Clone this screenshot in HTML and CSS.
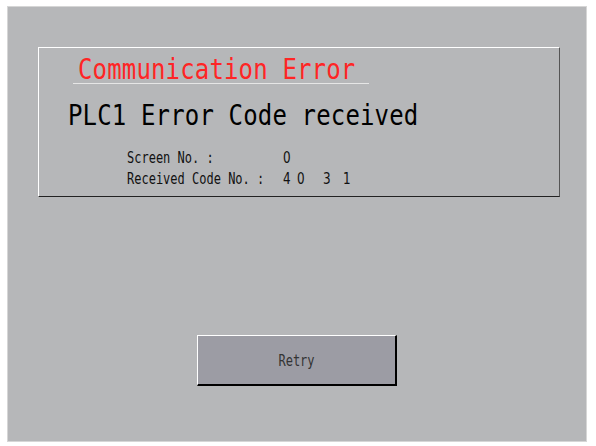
FILE: index.html
```html
<!DOCTYPE html>
<html>
<head>
<meta charset="utf-8">
<link rel="stylesheet" href="styles.css">
</head>
<body>
<div class="panel">
  <div class="msgbox">
    <div class="title"><span class="stretch">Communication Error</span></div>
    <div class="headline"><span class="stretch">PLC1 Error Code received</span></div>
    <div class="info">
      <div class="row"><span class="stretch-s"><span class="lbl">Screen No. :</span><span class="val">0</span></span></div>
      <div class="row"><span class="stretch-s"><span class="lbl">Received Code No. :</span><span class="val"><span class="d1">4</span><span class="d2">0</span><span class="d3">3</span><span>1</span></span></span></div>
    </div>
  </div>
  <button class="retry"><span class="stretch-s">Retry</span></button>
</div>
</body>
</html>
```
FILE: styles.css
```css
html, body {
  margin: 0;
  padding: 0;
  background: #ffffff;
}
body {
  width: 596px;
  height: 446px;
  overflow: hidden;
  font-family: "DejaVu Sans Mono", monospace;
}
.panel {
  margin: 6px 0 0 7px;
  width: 578px;
  height: 434px;
  background: #b6b7b9;
  border: 1px solid #d6d6d6;
  box-sizing: content-box;
  display: flex;
  flex-direction: column;
  align-items: flex-start;
}
.msgbox {
  margin: 40px 0 0 30px;
  width: 520px;
  height: 148px;
  border-top: 1px solid #ffffff;
  border-left: 1px solid #ffffff;
  border-right: 1px solid #555555;
  border-bottom: 1px solid #222222;
  display: flex;
  flex-direction: column;
}
.stretch {
  display: inline-block;
  transform: scaleY(1.15);
  transform-origin: 0 100%;
}
.stretch-s {
  display: inline-block;
  transform: scaleY(1.25);
  transform-origin: 0 100%;
}
.title {
  margin: 9px 0 0 34px;
  width: 291px;
  padding: 3px 0 0 5px;
  height: 23px;
  border-bottom: 1px solid #e6e6e6;
  color: #ff2525;
  font-size: 24px;
  line-height: 24px;
  letter-spacing: 0.15px;
  white-space: pre;
}
.headline {
  margin: 22px 0 0 29px;
  height: 24px;
  color: #000000;
  font-size: 24px;
  line-height: 24px;
  letter-spacing: 0.15px;
  white-space: pre;
}
.info {
  margin: 23px 0 0 88px;
  font-size: 12px;
  line-height: 12px;
  color: #111111;
  white-space: pre;
  display: flex;
  flex-direction: column;
  gap: 9px;
}
.row {
  height: 12px;
}
.lbl {
  display: inline-block;
  width: 156px;
}
.val {
  display: inline-block;
  font-family: "DejaVu Sans", sans-serif;
  font-size: 12px;
}
.d1 { display: inline-block; width: 14px; }
.d2 { display: inline-block; width: 26px; }
.d3 { display: inline-block; width: 20px; }
.retry {
  margin: 138px 0 0 189px;
  width: 200px;
  height: 51px;
  padding: 6px 0 0 0;
  background: #9c9ca4;
  border-top: 1px solid #ffffff;
  border-left: 1px solid #ffffff;
  border-right: 2px solid #000000;
  border-bottom: 2px solid #000000;
  font-family: "DejaVu Sans Mono", monospace;
  font-size: 12px;
  color: #333333;
  letter-spacing: 0;
  white-space: pre;
}
```
